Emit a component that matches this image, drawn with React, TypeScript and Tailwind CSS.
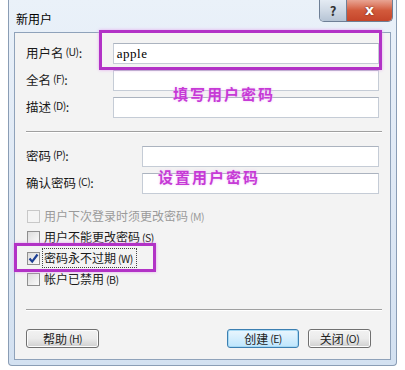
import React from "react";

const cjk = { fontFamily: '"Noto Sans CJK SC", "Noto Sans", sans-serif' };

const Key = ({ k }: { k: string }) => (
  <span className="ml-[2px] text-[10.5px] tracking-tighter">({k})</span>
);

const TextBox = ({ value, className = "" }: { value?: string; className?: string }) => (
  <div
    className={`h-[21px] border border-[#c5ccd6] border-t-[#abb3bf] bg-white flex items-center px-[3px] ${className}`}
  >
    {value && (
      <span className="text-[13px] tracking-[0.5px] text-black" style={{ fontFamily: '"Liberation Serif", serif' }}>
        {value}
      </span>
    )}
  </div>
);

const Check = ({ checked, disabled }: { checked?: boolean; disabled?: boolean }) => (
  <div
    className={`w-[13px] h-[13px] border flex items-center justify-center ${
      disabled ? "border-[#c8c8c8] bg-[#f4f4f4]" : "border-[#8f8f8f] bg-gradient-to-br from-[#dcdcdc] to-[#fbfbfb]"
    }`}
  >
    {checked && (
      <svg width="11" height="11" viewBox="0 0 11 11">
        <path d="M1.5 5.5 L4.2 8.6 L9.5 1.5" fill="none" stroke="#1c3f94" strokeWidth="2.2" />
      </svg>
    )}
  </div>
);

const Btn = ({ children, primary, className = "" }: { children: React.ReactNode; primary?: boolean; className?: string }) => (
  <div
    className={`h-[19px] rounded-[3px] border flex items-center justify-center text-[12px] text-[#222] ${
      primary
        ? "border-[#3c7fb1] bg-gradient-to-b from-[#eaf6fd] to-[#bee6fd] shadow-[inset_0_0_0_1px_#a6d9f4]"
        : "border-[#707070] bg-gradient-to-b from-[#f2f2f2] via-[#ebebeb] to-[#cfcfcf] shadow-[inset_0_0_0_1px_#fcfcfc]"
    } ${className}`}
  >
    {children}
  </div>
);

export default function App() {
  return (
    <div className="w-[405px] h-[370px] bg-white relative overflow-hidden" style={cjk}>
      {/* window frame */}
      <div className="ml-[8px] w-[389px] h-[366px] bg-gradient-to-b from-[#eaf1f9] via-[#dfe9f5] to-[#d3e1f1] border-l border-r border-b border-[#8a9db5] rounded-b-[4px] flex flex-col">
        {/* title bar */}
        <div className="h-[32px] flex items-start justify-between pl-[7px] pr-[3px]">
          <span className="mt-[10px] text-[12px] text-black">新用户</span>
          <div className="flex border border-t-0 border-[#6e7f96] rounded-b-[5px] overflow-hidden h-[22px]">
            <div className="w-[27px] flex items-center justify-center bg-gradient-to-b from-[#e4ebf3] via-[#cfd9e5] to-[#b6c4d5] border-r border-[#6e7f96] text-[#333] text-[13px] font-bold">
              ?
            </div>
            <div className="w-[45px] flex items-center justify-center bg-gradient-to-b from-[#e8a493] via-[#d25a3c] to-[#c5452a]">
              <span className="text-white text-[14px] font-bold" style={{ fontFamily: '"DejaVu Sans", sans-serif', textShadow: "0 0 2px #5a1a0a" }}>
                x
              </span>
            </div>
          </div>
        </div>
        {/* client area */}
        <div className="mx-[5px] h-[328px] border border-[#8fa2ba] bg-[#f3f3f3] relative text-[12.5px] text-[#1a1a1a] px-[11px]">
          <div className="pt-[10px] flex flex-col gap-[6px]">
            <div className="flex items-center">
              <span className="w-[87px] flex">用户名<Key k="U" />:</span>
              <TextBox value="apple" className="w-[267px]" />
            </div>
            <div className="flex items-center">
              <span className="w-[87px] flex">全名<Key k="F" />:</span>
              <TextBox className="w-[268px]" />
            </div>
            <div className="flex items-center">
              <span className="w-[87px] flex">描述<Key k="D" />:</span>
              <TextBox className="w-[268px]" />
            </div>
          </div>
          <div className="mt-[13px] border-t border-[#a0a0a0] border-b border-b-white w-[356px]" />
          <div className="mt-[13px] flex flex-col gap-[6px]">
            <div className="flex items-center">
              <span className="w-[117px] flex">密码<Key k="P" />:</span>
              <TextBox className="w-[238px]" />
            </div>
            <div className="flex items-center">
              <span className="w-[117px] flex">确认密码<Key k="C" />:</span>
              <TextBox className="w-[238px]" />
            </div>
          </div>
          <div className="mt-[15px] flex flex-col gap-[7px] ml-[1px] text-[12px]">
            <div className="flex items-center gap-[4px] h-[14px] text-[#9a9a9a]">
              <Check disabled />
              <span>用户下次登录时须更改密码<Key k="M" /></span>
            </div>
            <div className="flex items-center gap-[4px] h-[14px]">
              <Check />
              <span>用户不能更改密码<Key k="S" /></span>
            </div>
            <div className="flex items-center gap-[3px] h-[14px]">
              <Check checked />
              <span className="outline-1 outline-dotted outline-[#444] pl-[1px] pr-[3px] whitespace-nowrap">
                密码永不过期<Key k="W" />
              </span>
            </div>
            <div className="flex items-center gap-[4px] h-[14px]">
              <Check />
              <span>帐户已禁用<Key k="B" /></span>
            </div>
          </div>
          <div className="mt-[23px] border-t border-[#a0a0a0] border-b border-b-white w-[356px]" />
          <div className="mt-[18px] flex items-center">
            <Btn className="w-[73px]">帮助<Key k="H" /></Btn>
            <div className="flex-1" />
            <Btn primary className="w-[72px] mr-[9px]">创建<Key k="E" /></Btn>
            <Btn className="w-[63px] mr-[8px]">关闭<Key k="O" /></Btn>
          </div>

          {/* annotations */}
          <div className="absolute left-[84px] top-[-3px] w-[283px] h-[40px] border-[3px] border-[#b232c6] shadow-[0_0_3px_#e3a8ee]" />
          <div className="absolute left-[-1px] top-[210px] w-[142px] h-[29px] border-[3px] border-[#b232c6] shadow-[0_0_3px_#e3a8ee]" />
          <span
            className="absolute left-[158px] top-[50px] text-[15px] font-bold tracking-[2px] text-[#c63ad6]"
            style={{ textShadow: "0 0 3px #f3c6f8" }}
          >
            填写用户密码
          </span>
          <span
            className="absolute left-[143px] top-[133px] text-[15px] font-bold tracking-[2px] text-[#c63ad6]"
            style={{ textShadow: "0 0 3px #f3c6f8" }}
          >
            设置用户密码
          </span>
        </div>
      </div>
    </div>
  );
}
